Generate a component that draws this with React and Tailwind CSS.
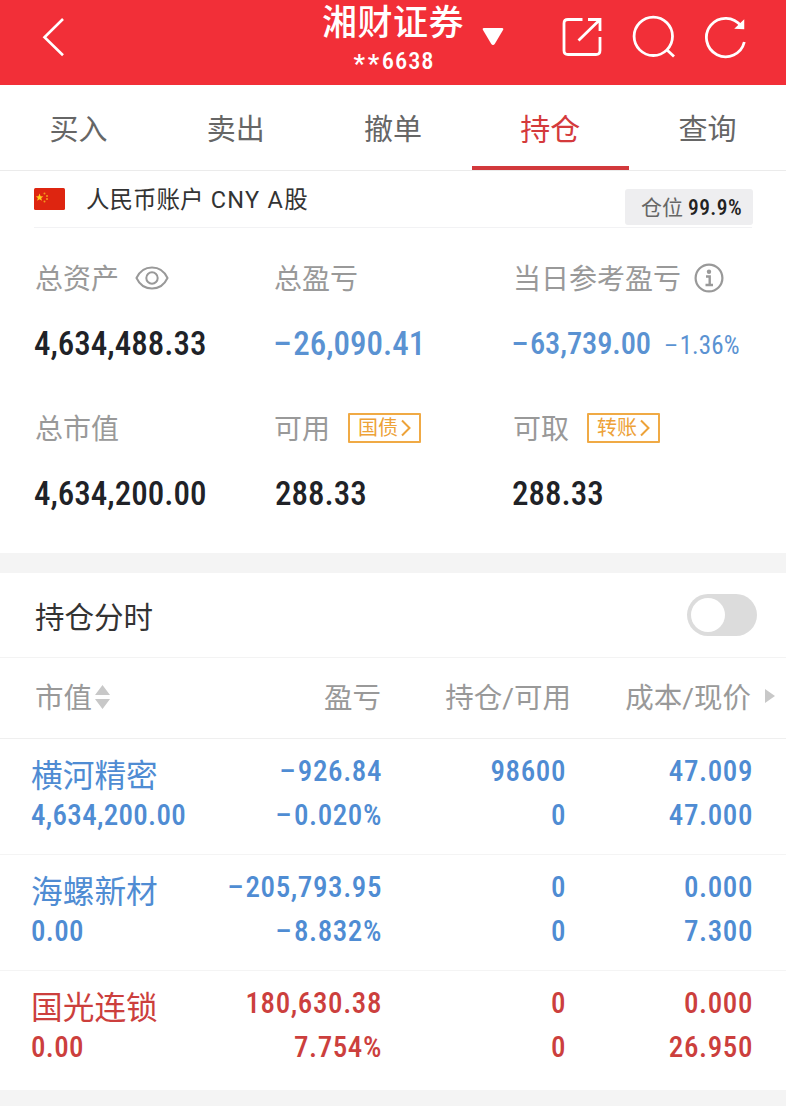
import clsx from 'clsx';

const TABS = ['买入', '卖出', '撤单', '持仓', '查询'];

const HOLDINGS = [
  {
    name: '横河精密',
    value: '4,634,200.00',
    profit: '−926.84',
    rate: '−0.020%',
    amount: '98600',
    available: '0',
    cost: '47.009',
    price: '47.000',
    up: false,
  },
  {
    name: '海螺新材',
    value: '0.00',
    profit: '−205,793.95',
    rate: '−8.832%',
    amount: '0',
    available: '0',
    cost: '0.000',
    price: '7.300',
    up: false,
  },
  {
    name: '国光连锁',
    value: '0.00',
    profit: '180,630.38',
    rate: '7.754%',
    amount: '0',
    available: '0',
    cost: '0.000',
    price: '26.950',
    up: true,
  },
];

// Figure with a wider minus sign in front
const Signed = ({ value }) => {
  if (!value.startsWith('−')) return value;
  return (
    <>
      <span className="mr-[1px] inline-block origin-right scale-x-120 pl-[2px]">−</span>
      {value.slice(1)}
    </>
  );
};

const Header = () => (
  <header className="flex h-[85px] bg-[#f22f38] text-white">
    <svg className="ml-[40px] mt-[16px] h-[42px] w-[26px] shrink-0" viewBox="0 0 26 42" fill="none" stroke="currentColor" strokeWidth="2.6">
      <path d="M23 3L4.500 21.300L23 39.300" />
    </svg>

    <div className="ml-[248px] w-[160px] shrink-0 text-center">
      <div className="ml-[-2px] mt-[4px] h-[39px] whitespace-nowrap text-[35px] font-medium leading-[40px] tracking-[0.5px]">湘财证券</div>
      <div className="mt-[4px] flex h-[28px] justify-center text-[24.500px] font-medium leading-[28px] font-stretch-[87.5%]">
        <span className="mt-[3px] text-[26px] tracking-[2.600px]">**</span>
        <span className="tracking-[0.9px]">6638</span>
      </div>
    </div>

    <svg className="ml-[8px] mt-[27px] h-[19px] w-[22px] shrink-0" viewBox="0 0 22 19" fill="currentColor">
      <path d="M2 1H20Q22 1 21 3L13 16.500Q11 19.500 9 16.500L1 3Q0 1 2 1Z" />
    </svg>

    <div className="ml-[56px] mt-[12px] flex gap-[24px]">
      {/* Share */}
      <svg className="h-[50px] w-[48px]" viewBox="0 0 48 50" fill="none" stroke="currentColor" strokeWidth="2.8">
        <path d="M22.500 7.500H8Q4 7.500 4 11.500V38.500Q4 42.500 8 42.500H36Q40 42.500 40 38.500V25" />
        <path d="M18.500 28.500L39 8.500M28 7.500H40V19" />
      </svg>
      {/* Search */}
      <svg className="h-[50px] w-[48px]" viewBox="0 0 48 50" fill="none" stroke="currentColor" strokeWidth="2.8">
        <circle cx="21.300" cy="24.300" r="19.200" />
        <path d="M34.500 37.500L42 44.500" />
      </svg>
      {/* Refresh */}
      <svg className="h-[50px] w-[48px]" viewBox="0 0 48 50" fill="none" stroke="currentColor" strokeWidth="2.8">
        <path d="M40.300 30A19.200 19.200 0 1 1 37 14" />
        <path d="M39.500 9V16.500L32 16Z" fill="currentColor" strokeWidth="1.500" />
      </svg>
    </div>
  </header>
);

const Tabs = () => (
  <nav className="flex h-[86px] border-b border-[#ebebeb]">
    {TABS.map((tab) => {
      const active = tab === '持仓';
      return (
        <div
          key={tab}
          className={clsx(
            'flex flex-1 flex-col items-center pt-[25px] leading-[40px]',
            active ? 'text-[30px] text-[#d43a3c]' : 'text-[29px] text-[#666]'
          )}
        >
          <span>{tab}</span>
          {active && <div className="mt-[16px] h-[4px] w-full shrink-0 bg-[#d2393c]" />}
        </div>
      );
    })}
  </nav>
);

const AccountBar = () => (
  <div className="mx-[34px] flex h-[57px] border-b border-[#f2f2f4]">
    <svg className="mt-[17px] h-[22px] w-[31px] shrink-0" viewBox="0 0 31 22">
      <rect width="31" height="22" rx="1.500" fill="#de2510" />
      <path d="M5.500 5.500L6.600 8.200L9.400 8.400L7.200 10.100L8 12.800L5.500 11.300L3.100 12.800L3.900 10.100L1.800 8.400L4.500 8.200Z" fill="#ffcf1c" />
      <g fill="#f39a1b">
        <circle cx="10.500" cy="5.500" r="1" />
        <circle cx="13" cy="8" r="1" />
        <circle cx="13" cy="11" r="1" />
        <circle cx="10.500" cy="13.500" r="1" />
      </g>
    </svg>
    <div className="ml-[21px] mt-[11px] whitespace-nowrap text-[23.500px] leading-[36px] text-[#333]">
      人民币账户<span className="tracking-[1.3px]"> CNY A</span>股
    </div>
    <div className="ml-auto mr-[-1px] mt-[18px] flex h-[36px] w-[128px] items-center justify-center rounded-[3px] bg-[#eeeef0] pl-[5px]">
      <span className="mt-[3px] text-[21px] text-[#666]">仓位</span>
      <span className="ml-[5px] mt-[2px] text-[21.500px] font-medium tracking-[0.4px] text-[#222] font-stretch-[87.5%]">99.9%</span>
    </div>
  </div>
);

const Label = ({ children }) => (
  <div className="flex h-[40px] items-center whitespace-nowrap text-[28px] leading-[40px] text-[#999]">{children}</div>
);

const Amount = ({ className, children }) => (
  <div className={clsx('flex h-[40px] items-baseline whitespace-nowrap text-[33px] font-medium leading-[40px] font-stretch-[87.5%]', className)}>
    {children}
  </div>
);

const Tag = ({ children }) => (
  <span className="ml-[18px] mt-[-5px] flex h-[30px] w-[73px] items-center justify-center rounded-[1px] border-2 border-[#f0aa45] text-[20px] leading-[26px] text-[#eda238]">
    {children}
    <svg className="ml-[3px] h-[18px] w-[10px]" viewBox="0 0 10 18" fill="none" stroke="currentColor" strokeWidth="2">
      <path d="M1 1.500L8.500 9L1 16.500" />
    </svg>
  </span>
);

const Summary = () => (
  <section className="grid h-[325px] grid-cols-[239px_239px_1fr] grid-rows-[150px_150px] pl-[35px] pt-[32px]">
    <div>
      <Label>
        总资产
        <svg className="ml-[16px] mt-[-5px] h-[26px] w-[34px]" viewBox="0 0 34 26" fill="none" stroke="currentColor" strokeWidth="2">
          <path d="M1.500 13C8 -1 26 -1 32.500 13C26 27 8 27 1.500 13Z" />
          <circle cx="17" cy="13" r="5.700" />
        </svg>
      </Label>
      <Amount className="ml-[-1px] mt-[24px] text-[#202227]">4,634,488.33</Amount>
    </div>
    <div>
      <Label>总盈亏</Label>
      <Amount className="mt-[24px] text-[#5a92d2]">
        <Signed value="−26,090.41" />
      </Amount>
    </div>
    <div>
      <Label>
        当日参考盈亏
        <svg className="ml-[13px] mt-[-4px] h-[30px] w-[30px]" viewBox="0 0 30 30" fill="none" stroke="currentColor" strokeWidth="2.2">
          <circle cx="15" cy="15" r="13.400" />
          <circle cx="15" cy="8.800" r="2.200" fill="currentColor" stroke="none" />
          <path d="M12 13.500H15.700V22M11.500 22H19" strokeWidth="2.400" />
        </svg>
      </Label>
      <Amount className="ml-[-1px] mt-[24px] text-[30.500px]! tracking-[-0.1px] text-[#5a92d2]">
        <Signed value="−63,739.00" />
        <span className="ml-[13px] text-[25px] font-normal tracking-[0.1px]">
          <Signed value="−1.36%" />
        </span>
      </Amount>
    </div>
    <div>
      <Label>总市值</Label>
      <Amount className="ml-[-1px] mt-[24px] text-[#202227]">4,634,200.00</Amount>
    </div>
    <div>
      <Label>可用<Tag>国债</Tag></Label>
      <Amount className="ml-px mt-[24px] text-[#202227]">288.33</Amount>
    </div>
    <div>
      <Label>可取<Tag>转账</Tag></Label>
      <Amount className="ml-[-1px] mt-[24px] text-[#202227]">288.33</Amount>
    </div>
  </section>
);

const IntradaySwitch = () => (
  <div className="flex h-[85px] items-center justify-between border-b border-[#f3f3f3] pl-[35px] pr-[29px]">
    <span className="mt-[6px] text-[29.500px] text-[#333]">持仓分时</span>
    <div className="flex h-[42px] w-[70px] items-center rounded-full bg-[#dcdcdc] pl-[4px]">
      <div className="h-[34px] w-[34px] rounded-full bg-white" />
    </div>
  </div>
);

const TableHead = () => (
  <div className="flex h-[81px] border-b border-[#efefef] pl-[35px] text-[28.500px] leading-[82px] text-[#999]">
    <div className="flex w-[170px]">
      市值
      <svg className="ml-[3px] mt-[27px] h-[24px] w-[15px]" viewBox="0 0 15 24" fill="#c8c8c8">
        <path d="M7.500 0L15 10H0ZM0 14H15L7.500 24Z" />
      </svg>
    </div>
    <div className="w-[176px] text-right">盈亏</div>
    <div className="w-[190px] text-right">持仓/可用</div>
    <div className="w-[180px] text-right">成本/现价</div>
    <svg className="ml-[14px] mt-[31px] h-[14px] w-[10px]" viewBox="0 0 10 14" fill="#c8c8c8">
      <path d="M0 0L10 7L0 14Z" />
    </svg>
  </div>
);

const Pair = ({ className, top, bottom }) => (
  <div className={clsx('pt-[10px] text-right tracking-[0.6px]', className)}>
    <div>
      <Signed value={top} />
    </div>
    <div>
      <Signed value={bottom} />
    </div>
  </div>
);

const HoldingRow = ({ item }) => (
  <div
    className={clsx(
      'flex h-[116px] border-b border-[#f4f4f4] pl-[31px] text-[29px] font-medium leading-[44px] tracking-[0.3px] font-stretch-[87.5%] last:h-[119px] last:border-b-0',
      item.up ? 'text-[#cc3f3d]' : 'text-[#4f8cd3]'
    )}
  >
    <div className="w-[171px] pt-[16px]">
      <div className="h-[38px] text-[31.700px] font-normal tracking-normal">{item.name}</div>
      <div>{item.value}</div>
    </div>
    <Pair className="w-[180px]" top={item.profit} bottom={item.rate} />
    <Pair className="w-[184px]" top={item.amount} bottom={item.available} />
    <Pair className="w-[187px]" top={item.cost} bottom={item.price} />
  </div>
);

const App = () => {
  return (
    <main className="min-h-[1116px] w-[786px] overflow-hidden bg-white font-[Roboto,'Noto_Sans_CJK_SC',sans-serif]">
      <Header />
      <Tabs />
      <AccountBar />
      <Summary />
      <div className="h-[20px] bg-[#f4f4f4]" />
      <IntradaySwitch />
      <TableHead />
      <div>
        {HOLDINGS.map((item) => (
          <HoldingRow key={item.name} item={item} />
        ))}
      </div>
      <div className="h-[16px] bg-[#f4f4f4]" />
    </main>
  );
};

export default App;
